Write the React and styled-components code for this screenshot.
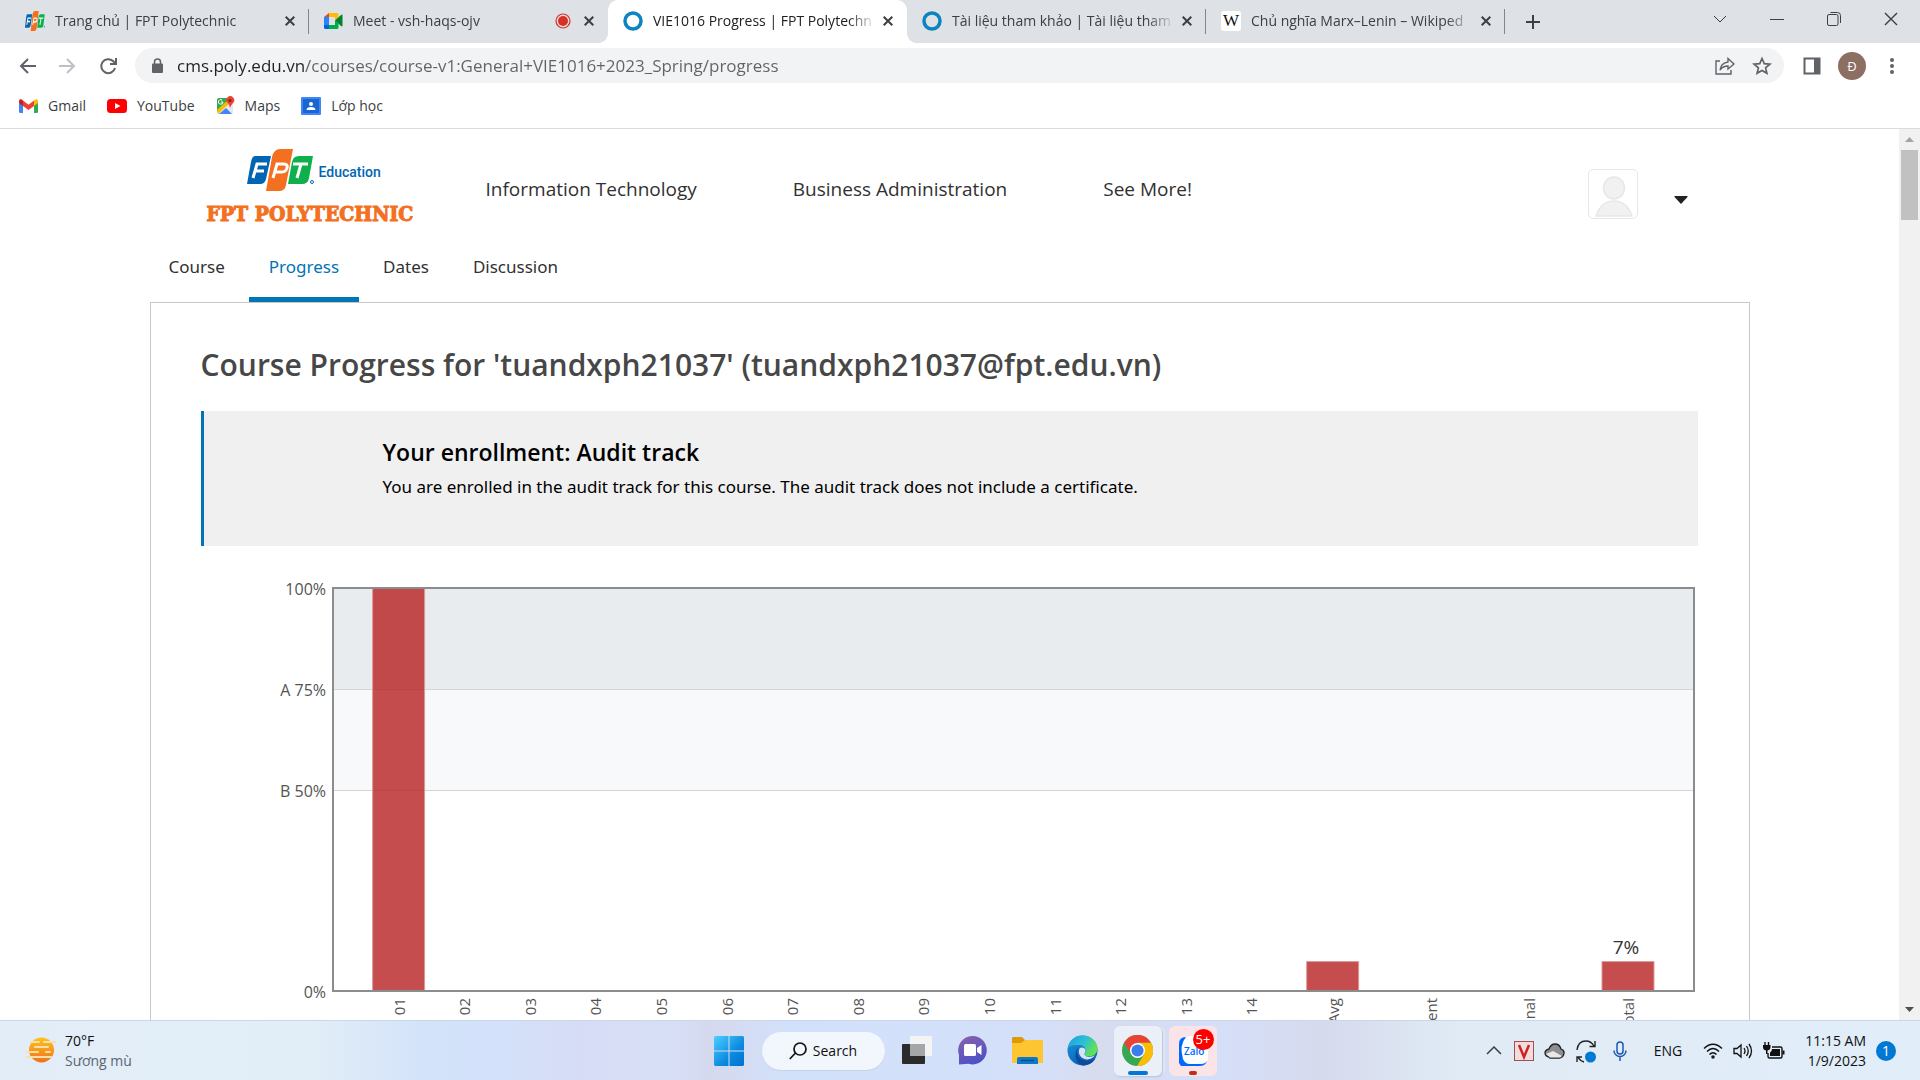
import React from "react";
import styled, { createGlobalStyle } from "styled-components";

const GlobalStyle = createGlobalStyle`
  *, *::before, *::after { box-sizing: border-box; }
  html, body, #root { height: 100%; }
  body { margin: 0; background: #fff; font-family: "Open Sans", "Noto Sans", sans-serif; overflow: hidden; }
  button { border: 0; padding: 0; background: none; font: inherit; color: inherit; cursor: pointer; }
  a { color: inherit; text-decoration: none; }
  h1, h2, p { margin: 0; }
  svg { display: block; }
`;

const Screen = styled.div`
  display: flex;
  flex-direction: column;
  height: 100vh;
`;

/* ---------- browser frame ---------- */

const TabStrip = styled.div`
  display: flex;
  align-items: stretch;
  height: 43px;
  padding-left: 10px;
  background: #dee1e6;
`;

const Tab = styled.div`
  flex: 0 1 299px;
  min-width: 0;
  display: flex;
  align-items: center;
  gap: 10px;
  padding: 0 11px 2px 15px;
  position: relative;
  color: ${(p) => (p.$active ? "#202124" : "#3c4043")};
  background: ${(p) => (p.$active ? "#fff" : "transparent")};
  border-radius: 10px 10px 0 0;
  &::before, &::after {
    content: "";
    display: ${(p) => (p.$active ? "block" : "none")};
    position: absolute;
    bottom: 0;
    width: 10px;
    height: 10px;
  }
  &::before { left: -10px; background: radial-gradient(circle at 0 0, transparent 10px, #fff 10px); }
  &::after { right: -10px; background: radial-gradient(circle at 100% 0, transparent 10px, #fff 10px); }
`;

const TabDivider = styled.span`
  align-self: center;
  width: 1px;
  height: 25px;
  margin: 0 0 0 -1px;
  background: #80868b;
`;

const TabTitle = styled.span`
  flex: 1;
  min-width: 0;
  margin-right: -6px;
  overflow: hidden;
  white-space: nowrap;
  font-size: 14px;
  line-height: 20px;
  mask-image: linear-gradient(90deg, #000 calc(100% - 28px), transparent);
`;

const IconButton = styled.button`
  flex: none;
  display: grid;
  place-items: center;
  width: ${(p) => p.$w || 16}px;
  height: ${(p) => p.$h || 16}px;
  color: ${(p) => p.$color || "#3c4043"};
`;

const NewTab = styled(IconButton)`
  align-self: center;
  margin-left: 14px;
`;

const WindowControls = styled.div`
  display: flex;
  align-items: center;
  margin-left: auto;
  height: 38px;
`;

const Toolbar = styled.div`
  display: flex;
  align-items: center;
  height: 45px;
  padding: 0 14px 0 12px;
  background: #fff;
`;

const NavButtons = styled.div`
  display: flex;
  gap: 10px;
  margin-right: 12px;
`;

const AddressBar = styled.label`
  flex: 1;
  display: flex;
  align-items: center;
  gap: 12px;
  height: 35px;
  padding: 0 12px 0 14px;
  border-radius: 18px;
  background: #f1f3f4;
`;

const AddressInput = styled.input`
  flex: 1;
  min-width: 0;
  height: 28px;
  border: 0;
  padding: 0;
  outline: 0;
  font: 17px/24px "Open Sans", "Noto Sans", sans-serif;
  color: #5f6368;
  background: linear-gradient(90deg, #202124 128px, #5f6368 128px);
  background-clip: text;
  -webkit-text-fill-color: transparent;
`;

const ToolbarActions = styled.div`
  display: flex;
  align-items: center;
  gap: 12px;
  margin-left: 14px;
`;

const Profile = styled.button`
  width: 28px;
  height: 28px;
  border-radius: 50%;
  background: #8d6e63;
  color: #fff;
  font-size: 13px;
`;

const Bookmarks = styled.nav`
  display: flex;
  align-items: center;
  gap: 21px;
  height: 41px;
  padding: 0 19px 5px;
  border-bottom: 1px solid #dadce0;
  background: #fff;
`;

const Bookmark = styled.a`
  display: flex;
  align-items: center;
  gap: 10px;
  font-size: 14px;
  line-height: 20px;
  color: #3c4043;
`;

/* ---------- page ---------- */

const Viewport = styled.div`
  flex: 1;
  min-height: 0;
  display: flex;
`;

const Page = styled.div`
  flex: 1;
  min-width: 0;
  overflow: hidden;
`;

const Scrollbar = styled.div`
  display: flex;
  flex-direction: column;
  align-items: center;
  justify-content: space-between;
  width: 21px;
  background: #f1f1f1;
`;

const ScrollTop = styled.div`
  display: flex;
  flex-direction: column;
  align-items: center;
`;

const Thumb = styled.div`
  width: 17px;
  height: 70px;
  background: #c1c1c1;
`;

const Container = styled.div`
  width: 100%;
  max-width: 1600px;
  margin: 0 auto;
`;

const SiteHeader = styled.header`
  display: flex;
  align-items: flex-start;
  height: 108px;
  padding: 20px 56px 0 57px;
`;

const Brand = styled.a`
  display: flex;
  flex-direction: column;
  gap: 11px;
  width: 215px;
`;

const BrandTop = styled.span`
  display: flex;
  align-items: center;
  gap: 5px;
  padding-left: 40px;
  color: #0066b3;
`;

const BrandUnit = styled.span`
  padding-top: 4px;
  font: 500 14px/20px Roboto, sans-serif;
`;

const BrandName = styled.span`
  font: bold 21px/24px "DejaVu Serif Condensed", "DejaVu Serif", serif;
  -webkit-text-stroke: 1px #f37021;
  color: #f37021;
  white-space: nowrap;
`;

const MainNav = styled.nav`
  display: flex;
  gap: 96px;
  margin: 26px 0 0 64px;
  font-size: 19px;
  line-height: 28px;
  color: #313131;
`;

const Account = styled.div`
  display: flex;
  align-items: center;
  gap: 30px;
  margin: 20px 0 0 auto;
`;

const Avatar = styled.a`
  display: block;
  width: 50px;
  height: 50px;
  border: 1px solid #e7e7e7;
  border-radius: 5px;
  overflow: hidden;
`;

const CaretButton = styled(IconButton)`
  margin-top: 12px;
`;

const CourseTabs = styled.nav`
  display: flex;
  gap: 4px;
  height: 65px;
  margin-left: -1px;
`;

const CourseTab = styled.a`
  padding: 16px 20px 0;
  font-family: "Noto Sans", "Open Sans", sans-serif;
  font-size: 17px;
  line-height: 28px;
  color: ${(p) => (p.$active ? "#0075b4" : "#313131")};
  border-bottom: 5px solid ${(p) => (p.$active ? "#0075b4" : "transparent")};
`;

const Panel = styled.main`
  padding: 40px 51px 0 50px;
  height: 900px;
  border: 1px solid #c8c8c8;
`;

const Title = styled.h1`
  font-size: 30px;
  line-height: 44px;
  font-weight: 600;
  color: #474747;
  white-space: nowrap;
`;

const Enrollment = styled.section`
  margin-top: 24px;
  height: 135px;
  padding: 23px 0 0 179px;
  border-left: 3px solid #0075b4;
  background: #f0f0f0;
  color: #000;
`;

const EnrollTitle = styled.h2`
  font-size: 23px;
  line-height: 36px;
  font-weight: 600;
`;

const EnrollText = styled.p`
  font-family: "Noto Sans", "Open Sans", sans-serif;
  font-size: 17px;
  line-height: 34px;
`;

const Chart = styled.figure`
  display: flex;
  margin: 42px 4px 0 0;
`;

const YAxis = styled.div`
  width: 132px;
  flex: none;
`;

const Plot = styled.svg`
  flex: 1;
  min-width: 0;
  height: 500px;
  overflow: visible;
`;

/* ---------- taskbar ---------- */

const Taskbar = styled.footer`
  display: grid;
  grid-template-columns: 1fr auto 1fr;
  align-items: center;
  height: 60px;
  border-top: 1px solid #c9d6ec;
  color: #111;
  background: linear-gradient(90deg, #e2edf8 0%, #e2eef7 16%, #d3e3fa 22%, #d3e2fa 26%, #d6dcf5 30%, #d7dff6 35%,
    #d5d9ee 37%, #d2e1fa 41%, #d4e0fa 54%, #d7dcee 57%, #d5dff9 63%, #d6daed 69%, #e0ebf5 76%, #e1edf9 100%);
`;

const Weather = styled.button`
  display: flex;
  align-items: center;
  gap: 9px;
  padding-left: 26px;
  justify-self: start;
  text-align: left;
  font-size: 14px;
  line-height: 20px;
`;

const Muted = styled.span`
  display: block;
  color: #5b6470;
`;

const Dock = styled.div`
  display: flex;
  align-items: center;
  padding-right: 2px;
`;

const DockItem = styled.button`
  position: relative;
  display: grid;
  place-items: center;
  width: ${(p) => (p.$tile ? 48 : 55)}px;
  height: 50px;
  border-radius: 6px;
  background: ${(p) => p.$tile || "none"};
  margin-left: ${(p) => (p.$tile ? 4 : 0)}px;
  margin-right: ${(p) => (p.$stacked ? 3 : 0)}px;
  box-shadow: ${(p) => (p.$stacked ? "1px 1px 2px #b9c3da, 4px 0 0 -1px #e4e9f5" : "none")};
`;

const Indicator = styled.span`
  position: absolute;
  bottom: 1px;
  left: 50%;
  width: ${(p) => p.$w}px;
  height: 4px;
  margin-left: ${(p) => -p.$w / 2}px;
  border-radius: 2px;
  background: ${(p) => p.$color};
`;

const Badge = styled.span`
  position: absolute;
  top: 3px;
  right: 3px;
  width: 21px;
  height: 21px;
  border-radius: 50%;
  background: #f00;
  color: #fff;
  font-size: 13px;
  line-height: 20px;
  text-align: center;
`;

const SearchButton = styled.button`
  display: flex;
  align-items: center;
  justify-content: center;
  gap: 6px;
  width: 123px;
  height: 38px;
  margin: 0 5px;
  border-radius: 19px;
  background: #f2f6fd;
  font-size: 14px;
  box-shadow: 0 1px 1px #c8d2e6;
`;

const Tray = styled.div`
  display: flex;
  align-items: center;
  justify-content: flex-end;
  gap: 10px;
  padding-right: 24px;
  font-size: 14px;
`;

const Language = styled.button`
  margin: 0 11px;
`;

const Clock = styled.button`
  margin-left: 10px;
  text-align: right;
  line-height: 20px;
`;

const Notice = styled.button`
  width: 20px;
  height: 20px;
  border-radius: 50%;
  background: #0078d4;
  color: #fff;
  line-height: 20px;
`;

/* ---------- icons ---------- */

const FptBlocks = ({ width, height }) => (
  <svg width={width} height={height} viewBox="0 0 67 42" preserveAspectRatio="none" aria-hidden="true">
    <path d="M8 7h16l-5 23q-1 5-6 5H0L4 13q1-6 4-6z" fill="#0066b3" />
    <path d="M33 0h13l-7 36q-1 6-7 6H19L25 8q2-8 8-8z" fill="#f37021" />
    <path d="M52 7h14l-4 22q-1 6-7 6H41l4-22q1-6 7-6z" fill="#0db14b" />
    <g fill="none" stroke="#fff" strokeWidth="3">
      <path d="M20 15H10L6 29M8 22h9M26 29l4-14h7q4 0 3 4t-5 4h-7M46 15h15M54 15l-4 14" />
    </g>
    <circle cx="65" cy="33" r="1.500" fill="none" stroke="#0066b3" />
  </svg>
);

const Meet = () => (
  <svg width="19" height="17" viewBox="0 0 19 17" aria-hidden="true">
    <path d="M5 1h8q1.500 0 1.500 1.500V6L11 8.500V5H5z" fill="#fbbc04" />
    <path d="M5 1v4H0z" fill="#ea4335" />
    <path d="M0 5h5v8H0z" fill="#2684fc" />
    <path d="M0 13h5v4H1.500Q0 17 0 15.500z" fill="#0066da" />
    <path d="M5 13h6V8.500l3.500 3v4q0 1.500-1.500 1.500H5z" fill="#00ac47" />
    <path d="M11 8.500 17 3q1.500-1 1.500.500v10q0 1.500-1.500.500z" fill="#00832d" />
  </svg>
);

const Ring = () => (
  <svg width="20" height="20" viewBox="0 0 20 20" aria-hidden="true">
    <circle cx="10" cy="10" r="8" fill="none" stroke="#0d84c2" strokeWidth="3.500" />
  </svg>
);

const WikiMark = styled.span`
  width: 20px;
  height: 20px;
  border-radius: 3px;
  background: #fff;
  color: #111;
  font: 17px/20px "Liberation Serif", serif;
  text-align: center;
`;

const Recording = () => (
  <svg width="16" height="16" viewBox="0 0 16 16" aria-hidden="true">
    <circle cx="8" cy="8" r="7" fill="none" stroke="#d93025" strokeWidth="1.200" />
    <circle cx="8" cy="8" r="5" fill="#d93025" />
  </svg>
);

const Stroke = ({ w = 20, h = 20, box, d, sw = 2, fill = "none" }) => (
  <svg width={w} height={h} viewBox={box || `0 0 ${w} ${h}`} fill={fill} stroke="currentColor" strokeWidth={sw} aria-hidden="true">
    <path d={d} />
  </svg>
);

const Gmail = () => (
  <svg width="19" height="14" viewBox="0 0 19 14" aria-hidden="true">
    <path d="M0 3v9.500Q0 14 1.500 14H4V5z" fill="#4285f4" />
    <path d="M19 3v9.500Q19 14 17.500 14H15V5z" fill="#34a853" />
    <path d="M15 1.500 16 .600Q19-.800 19 2.500V4l-4 3z" fill="#fbbc04" />
    <path d="M4 1.500 3 .600Q0-.800 0 2.500V4l4 3z" fill="#c5221f" />
    <path d="M4 1.500 9.500 5.700 15 1.500V7l-5.500 4L4 7z" fill="#ea4335" />
  </svg>
);

const YouTube = () => (
  <svg width="20" height="14" viewBox="0 0 20 14" aria-hidden="true">
    <rect width="20" height="14" rx="3.500" fill="#f00" />
    <path d="m8 4 5.500 3L8 10z" fill="#fff" />
  </svg>
);

const Maps = () => (
  <svg width="19" height="19" viewBox="0 0 19 19" aria-hidden="true">
    <rect x="1" y="2" width="16" height="16" rx="2" fill="#e8eaed" />
    <path d="M3 2h12L1 16V4q0-2 2-2z" fill="#34a853" />
    <path d="m3 18 7-6 6 6z" fill="#4285f4" />
    <path d="m1 14 12-11 2 3L2 18z" fill="#fbbc04" />
    <path d="M7 6H5M7 6a2.300 2.300 0 1 1-1-2" stroke="#fff" fill="none" />
    <path d="M14 13q0-4-3-6.500a4 4 0 1 1 6.500 0Q14 10 14 13z" fill="#ea4335" />
    <circle cx="14" cy="4.500" r="1.500" fill="#8c1a11" />
  </svg>
);

const Classroom = () => (
  <svg width="20" height="18" viewBox="0 0 20 18" aria-hidden="true">
    <rect width="20" height="18" rx="1" fill="#4285f4" />
    <rect x="2" y="2" width="16" height="14" fill="#1967d2" />
    <circle cx="10" cy="7" r="2" fill="#fff" />
    <path d="M5.500 13q0-3 4.500-3t4.500 3z" fill="#fff" />
  </svg>
);

const Person = () => (
  <svg width="48" height="48" viewBox="0 0 48 48" fill="#f1f1f1" stroke="#e7e7e7" strokeWidth="1.500" aria-hidden="true">
    <ellipse cx="25" cy="18" rx="10.500" ry="11" />
    <path d="M7 46q5-15 18-15t18 15z" />
  </svg>
);

const Fog = () => (
  <svg width="30" height="27" viewBox="0 0 30 27" aria-hidden="true">
    <defs>
      <linearGradient id="sun" x2="0" y2="1"><stop stopColor="#fcc419" /><stop offset="1" stopColor="#f2701d" /></linearGradient>
    </defs>
    <circle cx="15.500" cy="13" r="12.500" fill="url(#sun)" />
    <path d="M5 5h8M18 5h12M9 10h13M0 15h12M20 15h4M0 20h25" stroke="#f7dfae" strokeWidth="2" strokeLinecap="round" />
  </svg>
);

const WindowsLogo = () => (
  <svg width="30" height="30" viewBox="0 0 30 30" aria-hidden="true">
    <defs>
      <linearGradient id="win" x2="1" y2="1"><stop stopColor="#4cd0ff" /><stop offset="0.600" stopColor="#0c8ae0" /><stop offset="1" stopColor="#0071d0" /></linearGradient>
    </defs>
    <path d="M1 0h13.500v14.500H0V1zM15.500 0H29l1 1v13.500H15.500zM0 15.500h14.500V30H1l-1-1zM15.500 15.500H30V29l-1 1H15.500z" fill="url(#win)" />
  </svg>
);

const TaskView = () => (
  <svg width="30" height="29" viewBox="0 0 30 29" aria-hidden="true">
    <rect y="8" width="23" height="20" rx="1" fill="#2b2b2b" />
    <rect x="8" width="22" height="20" rx="1" fill="#f4f4f4" />
    <path d="M8 8h15v12H8z" fill="#a5a6a8" />
  </svg>
);

const Chat = () => (
  <svg width="29" height="29" viewBox="0 0 29 29" aria-hidden="true">
    <defs>
      <linearGradient id="chat" x2="0.400" y2="1"><stop stopColor="#8a62ac" /><stop offset="1" stopColor="#4f52c4" /></linearGradient>
    </defs>
    <path d="M14.500 0a14.200 14.200 0 1 1-4 27.800L1 28.500V19A14.200 14.200 0 0 1 14.500 0z" fill="url(#chat)" />
    <rect x="6" y="8" width="12" height="12" rx="1.500" fill="#fff" />
    <path d="m19 12 4.500-3v10L19 16z" fill="#fff" />
  </svg>
);

const Explorer = () => (
  <svg width="31" height="27" viewBox="0 0 31 27" aria-hidden="true">
    <path d="M1 0h9l3 3v5H0V1z" fill="#dd9a06" />
    <path d="M0 6h9l4-3h17l1 1v22H0z" fill="#fcc531" />
    <path d="M5 27v-5q0-2 2-2h17q2 0 2 2v5z" fill="#0f79c8" />
    <path d="M9 23.500h13" stroke="#07508f" strokeWidth="1.500" />
  </svg>
);

const Edge = () => (
  <svg width="31" height="31" viewBox="0 0 31 31" aria-hidden="true">
    <defs>
      <linearGradient id="edgeTop" y2="0.500"><stop stopColor="#1b9de2" /><stop offset="0.550" stopColor="#2bc0d6" /><stop offset="1" stopColor="#62e250" /></linearGradient>
      <linearGradient id="edgeLow" x2="0.600" y2="1"><stop stopColor="#1a9be0" /><stop offset="1" stopColor="#0a5cb4" /></linearGradient>
    </defs>
    <circle cx="15.500" cy="15.500" r="15" fill="url(#edgeLow)" />
    <path d="M.700 14C2 5 8 .500 15.500.500c9 0 15 6 15 13 0 5-4 8-8.500 8-4 0-5.500-1.500-4-3.500 2.500-3-.500-8-6-8S2 10.500.700 14z" fill="url(#edgeTop)" />
    <path d="M12 12c-3 4-2 10 3 12.500 4 2 9 1.500 13.500-1C26 28 21 30.500 16 30.500 8 29 6 17 12 12z" fill="#10499a" />
    <path d="M12.500 13.500c2-2 6.500-.500 6 2.500-.200 1.500-2 3-.500 4.500s5 2.500 10.500-.500c-3 4-8 5.500-12 3.500-4-2-5.500-6-4-10z" fill="#d8e2f5" />
  </svg>
);

const Chrome = () => (
  <svg width="31" height="31" viewBox="0 0 30 30" aria-hidden="true">
    <circle cx="15" cy="15" r="15" fill="#34a853" />
    <path d="M2 7.500A15 15 0 0 1 28 7.500H15L9 18.500z" fill="#ea4335" />
    <path d="M28 7.500A15 15 0 0 1 14.500 30L21.500 18.500 15 7.500z" fill="#fbbc04" />
    <circle cx="15" cy="15" r="7.300" fill="#fff" />
    <circle cx="15" cy="15" r="5.900" fill="#3b7ded" />
  </svg>
);

const Zalo = () => (
  <svg width="32" height="32" viewBox="0 0 32 32" aria-hidden="true">
    <path d="M9 2h14q7 0 7 7v15q0 7-7 7H4l-2-3V9q0-7 7-7z" fill="#0068ff" />
    <path d="M13 1h10q8 0 8 8v13q0 7-7 7H13Q8 29 6 24 2 10 9 2z" fill="#fff" />
    <text x="7" y="20" fontFamily="Open Sans, sans-serif" fontWeight="600" fontSize="10" fill="#0068ff">Zalo</text>
  </svg>
);

const Cloud = () => (
  <svg width="21" height="16" viewBox="0 0 21 16" aria-hidden="true">
    <path d="M5 14q-4-1-4-4t4-4q2-5 6-5 4.500 0 6 5 3.500 1 3 4.500T16 15H6z" fill="#8e8e90" stroke="#222" strokeWidth="1.300" />
    <path d="M2 11 9 8l9 5-2 1.500H6z" fill="#e8e8e8" />
  </svg>
);

const Sync = () => (
  <svg width="22" height="24" viewBox="0 0 22 24" fill="none" stroke="#222" strokeWidth="1.400" aria-hidden="true">
    <path d="M2 11Q3 2 11 2q5 0 8 5M20 2v5.500h-5.500M2 23v-5h5M3 18q2 4 6 5" />
    <circle cx="15.500" cy="18" r="5.500" fill="#0078d4" stroke="none" />
  </svg>
);

const Battery = () => (
  <svg width="22" height="18" viewBox="0 0 22 18" aria-hidden="true">
    <path d="M2 0v3M5.500 0v3" stroke="#111" strokeWidth="1.400" />
    <path d="M0 3h7.500v2Q7.500 8 4.500 8.500V12h-1.500V8.500Q0 8 0 5z" fill="#111" />
    <path d="M9 5h8.500q1.500 0 1.500 1.500v8q0 1.500-1.500 1.500H6.500Q5 16 5 14.500V11" fill="none" stroke="#111" strokeWidth="1.400" />
    <path d="M9 7h8v7H7v-3.500Q9 9 9 7z" fill="#111" />
    <path d="M20.500 8.500v4" stroke="#111" strokeWidth="2" />
  </svg>
);

const CloseX = ({ size = 10, sw = 2 }) => (
  <Stroke w={size} h={size} box="0 0 10 10" d="M.700.700 9.300 9.300M9.300.700.700 9.300" sw={sw} />
);

/* ---------- data ---------- */

const tabs = [
  { title: "Trang chủ | FPT Polytechnic", icon: <FptBlocks width={20} height={20} />, divider: true },
  { title: "Meet - vsh-haqs-ojv", icon: <Meet />, recording: true },
  { title: "VIE1016 Progress | FPT Polytechn", icon: <Ring />, active: true },
  { title: "Tài liệu tham khảo | Tài liệu tham", icon: <Ring />, divider: true },
  { title: "Chủ nghĩa Marx–Lenin – Wikiped", icon: <WikiMark>W</WikiMark>, divider: true },
];

const bookmarks = [
  ["Gmail", <Gmail />],
  ["YouTube", <YouTube />],
  ["Maps", <Maps />],
  ["Lớp học", <Classroom />],
];

const PLOT_HEIGHT = 403;
const grades = [
  ...Array.from({ length: 14 }, (_, i) => ({
    label: String(i + 1).padStart(2, "0"),
    at: 4.82 + i * 4.82,
    value: i === 0 ? 100 : 0,
  })),
  { label: "Avg", at: 73.45, value: 7.3 },
  { label: "ent", at: 80.7, value: 0 },
  { label: "nal", at: 87.9, value: 0 },
  { label: "Total", at: 95.15, value: 7.3, note: "7%" },
];
const levels = [["100%", 0], ["A 75%", 101], ["B 50%", 202], ["0%", 403]];

const GradeChart = () => (
  <Chart aria-label="Grades by assignment">
    <YAxis>
      <svg width="131" height="420" overflow="visible" fontSize="16" fill="#545454" textAnchor="end">
        {levels.map(([text, y]) => (
          <text key={text} x="125" y={y + 7}>{text}</text>
        ))}
      </svg>
    </YAxis>
    <Plot>
      <rect y="0" width="100%" height="101" fill="#e8ecef" />
      <rect y="101" width="100%" height="101" fill="#f8f9fb" />
      <line x2="100%" y1="101.500" y2="101.500" stroke="#d3d5d7" />
      <line x2="100%" y1="202.500" y2="202.500" stroke="#d3d5d7" />
      {grades.map((g) => (
        <svg key={g.label} x={`${g.at}%`} overflow="visible">
          {g.value > 0 && (
            <rect x="-26" y={PLOT_HEIGHT * (1 - g.value / 100)} width="52" height={(PLOT_HEIGHT * g.value) / 100}
              fill="#b72121" fillOpacity="0.800" stroke="#dc9a9a" />
          )}
          {g.note && <text x="-2" y={PLOT_HEIGHT - 37} fontSize="19" textAnchor="middle" fill="#333">{g.note}</text>}
          <text transform="rotate(-90)" x="-410" y="6" fontSize="15" fill="#545454" textAnchor="end">{g.label}</text>
        </svg>
      ))}
      <rect x="0" y="0" width="100%" height={PLOT_HEIGHT} fill="none" stroke="#8a8c8e" strokeWidth="2" />
    </Plot>
  </Chart>
);

/* ---------- app ---------- */

export default function App() {
  return (
    <Screen>
      <GlobalStyle />
      <TabStrip>
        {tabs.map((t) => (
          <React.Fragment key={t.title}>
            <Tab $active={t.active}>
              {t.icon}
              <TabTitle>{t.title}</TabTitle>
              {t.recording && <Recording />}
              <IconButton aria-label="Close tab"><CloseX /></IconButton>
            </Tab>
            {t.divider && <TabDivider />}
          </React.Fragment>
        ))}
        <NewTab $w={28} $h={28} aria-label="New tab"><Stroke w={14} h={14} d="M7 0v14M0 7h14" /></NewTab>
        <WindowControls>
          <IconButton $w={57} $h={38} aria-label="Search tabs"><Stroke w={14} h={8} d="m1 1 6 6 6-6" sw={1} /></IconButton>
          <IconButton $w={57} $h={38} aria-label="Minimize"><Stroke w={14} h={1} d="M0 .500h14" sw={1} /></IconButton>
          <IconButton $w={57} $h={38} aria-label="Restore"><Stroke w={14} h={14} d="M3.500 .500h7q3 0 3 3V11M.500 4q0-1.500 1.500-1.500h7.500q1.500 0 1.500 1.500v8q0 1.500-1.500 1.500H2Q.500 13.500.500 12z" sw={1} /></IconButton>
          <IconButton $w={58} $h={38} aria-label="Close window"><CloseX size={14} sw={1} /></IconButton>
        </WindowControls>
      </TabStrip>

      <Toolbar>
        <NavButtons>
          <IconButton $w={30} $h={30} $color="#5f6368" aria-label="Back"><Stroke w={17} h={16} d="M17 8H2M9 1 2 8l7 7" /></IconButton>
          <IconButton $w={30} $h={30} $color="#bdc1c6" aria-label="Forward"><Stroke w={17} h={16} d="M0 8h15M8 1l7 7-7 7" /></IconButton>
          <IconButton $w={31} $h={30} $color="#5f6368" aria-label="Reload">
            <Stroke w={18} h={18} d="M16 11A7 7 0 1 1 14 4l2 2M17 1v6h-6" />
          </IconButton>
        </NavButtons>
        <AddressBar>
          <svg width="16" height="16" viewBox="0 0 16 16" aria-hidden="true">
            <rect x="3" y="5.500" width="11" height="9.500" rx="1" fill="#5f6368" />
            <path d="M5.500 6V4q0-3 3-3t3 3v2" fill="none" stroke="#5f6368" strokeWidth="1.500" />
          </svg>
          <AddressInput
            aria-label="Address"
            defaultValue="cms.poly.edu.vn/courses/course-v1:General+VIE1016+2023_Spring/progress"
          />
          <IconButton $w={30} $h={28} $color="#5f6368" aria-label="Share">
            <Stroke w={20} h={18} d="M5 4H1v13h15v-4M5 13q1-7 8-8V1.500L19 7l-6 5V9q-5 0-8 4z" sw={1.4} />
          </IconButton>
          <IconButton $w={20} $h={28} $color="#5f6368" aria-label="Bookmark">
            <Stroke w={20} h={20} box="0 0 24 24" d="m12 3 2.700 6.200 6.800.600-5.200 4.400 1.600 6.600L12 17.300l-5.900 3.500 1.600-6.600-5.200-4.400 6.800-.600z" />
          </IconButton>
        </AddressBar>
        <ToolbarActions>
          <IconButton $w={28} $h={28} $color="#5f6368" aria-label="Side panel">
            <svg width="18" height="18" viewBox="0 0 18 18"><path d="M1.500 1.500h15v15h-15z" fill="none" stroke="currentColor" strokeWidth="2" /><path d="M11 1h6v16h-6z" fill="currentColor" /></svg>
          </IconButton>
          <Profile aria-label="Profile">Đ</Profile>
          <IconButton $w={28} $h={28} $color="#5f6368" aria-label="Menu">
            <svg width="4" height="18" viewBox="0 0 4 18" fill="currentColor"><circle cx="2" cy="3" r="2" /><circle cx="2" cy="9" r="2" /><circle cx="2" cy="15" r="2" /></svg>
          </IconButton>
        </ToolbarActions>
      </Toolbar>

      <Bookmarks>
        {bookmarks.map(([name, icon]) => (
          <Bookmark key={name} href="#">{icon}{name}</Bookmark>
        ))}
      </Bookmarks>

      <Viewport>
        <Page>
          <Container>
            <SiteHeader>
              <Brand href="#">
                <BrandTop><FptBlocks width={67} height={42} /><BrandUnit>Education</BrandUnit></BrandTop>
                <BrandName>FPT POLYTECHNIC</BrandName>
              </Brand>
              <MainNav>
                <a href="#">Information Technology</a>
                <a href="#">Business Administration</a>
                <a href="#">See More!</a>
              </MainNav>
              <Account>
                <Avatar href="#" aria-label="Profile"><Person /></Avatar>
                <CaretButton $w={26} aria-label="Account menu" $color="#222">
                  <svg width="14" height="8" viewBox="0 0 14 8"><path d="M1 0h12q1 0 .500 1L7 8 .500 1Q0 0 1 0z" fill="currentColor" /></svg>
                </CaretButton>
              </Account>
            </SiteHeader>
            <CourseTabs>
              <CourseTab href="#">Course</CourseTab>
              <CourseTab href="#" $active>Progress</CourseTab>
              <CourseTab href="#">Dates</CourseTab>
              <CourseTab href="#">Discussion</CourseTab>
            </CourseTabs>
            <Panel>
              <Title>Course Progress for 'tuandxph21037' (tuandxph21037@fpt.edu.vn)</Title>
              <Enrollment>
                <EnrollTitle>Your enrollment: Audit track</EnrollTitle>
                <EnrollText>You are enrolled in the audit track for this course. The audit track does not include a certificate.</EnrollText>
              </Enrollment>
              <GradeChart />
            </Panel>
          </Container>
        </Page>
        <Scrollbar>
          <ScrollTop>
            <IconButton $w={21} $h={21} $color="#a3a3a3" aria-label="Scroll up">
              <svg width="9" height="5" viewBox="0 0 9 5"><path d="M0 5 4.500 0 9 5z" fill="currentColor" /></svg>
            </IconButton>
            <Thumb />
          </ScrollTop>
          <IconButton $w={21} $h={21} $color="#505050" aria-label="Scroll down">
            <svg width="9" height="5" viewBox="0 0 9 5"><path d="M0 0h9L4.500 5z" fill="currentColor" /></svg>
          </IconButton>
        </Scrollbar>
      </Viewport>

      <Taskbar>
        <Weather>
          <Fog />
          <span>70°F<Muted>Sương mù</Muted></span>
        </Weather>
        <Dock>
          <DockItem aria-label="Start"><WindowsLogo /></DockItem>
          <SearchButton>
            <Stroke w={18} h={18} d="M.800 17 6 11.500M5 7a6 6 0 1 1 12 0A6 6 0 1 1 5 7" sw={1.700} />
            Search
          </SearchButton>
          <DockItem aria-label="Task view"><TaskView /></DockItem>
          <DockItem aria-label="Chat"><Chat /></DockItem>
          <DockItem aria-label="File Explorer"><Explorer /></DockItem>
          <DockItem aria-label="Edge"><Edge /></DockItem>
          <DockItem aria-label="Chrome" $tile="#ebeff8" $stacked><Chrome /><Indicator $w={20} $color="#0078d4" /></DockItem>
          <DockItem aria-label="Zalo" $tile="#fbe4e8"><Zalo /><Badge>5+</Badge><Indicator $w={8} $color="#c42b1c" /></DockItem>
        </Dock>
        <Tray>
          <IconButton $w={20} aria-label="Hidden icons"><Stroke w={16} h={9} d="m1 8 7-7 7 7" sw={1.500} /></IconButton>
          <svg width="20" height="20" viewBox="0 0 20 20" aria-hidden="true">
            <rect x="0.500" y="0.500" width="19" height="19" fill="#f5dcdc" stroke="#a05050" />
            <path d="m5 4 5 12 5-12" fill="none" stroke="#cc2424" strokeWidth="2.500" />
          </svg>
          <Cloud />
          <Sync />
          <IconButton $w={26} $h={24} $color="#1b58b5" aria-label="Microphone">
            <Stroke w={14} h={20} d="M4 4a3 3 0 0 1 6 0v6a3 3 0 0 1-6 0zM1 9.500a6 6 0 0 0 12 0M7 15.500V20" sw={1.500} />
          </IconButton>
          <Language>ENG</Language>
          <Stroke w={20} h={16} d="M1 5.500Q10-3 19 5.500M4 8.500q6-6 12 0M6.500 11.500q3.500-3.500 7 0M9 14a1 1 0 1 1 2 0 1 1 0 1 1-2 0" sw={1.500} />
          <Stroke w={20} h={16} d="M1 5.500h3L8 2v12L4 10.500H1zM11 5q2 3 0 6M13.500 3q3.500 5 0 10M16 1q5 7 0 14" sw={1.300} />
          <Battery />
          <Clock>11:15 AM<br />1/9/2023</Clock>
          <Notice aria-label="Notifications">1</Notice>
        </Tray>
      </Taskbar>
    </Screen>
  );
}
